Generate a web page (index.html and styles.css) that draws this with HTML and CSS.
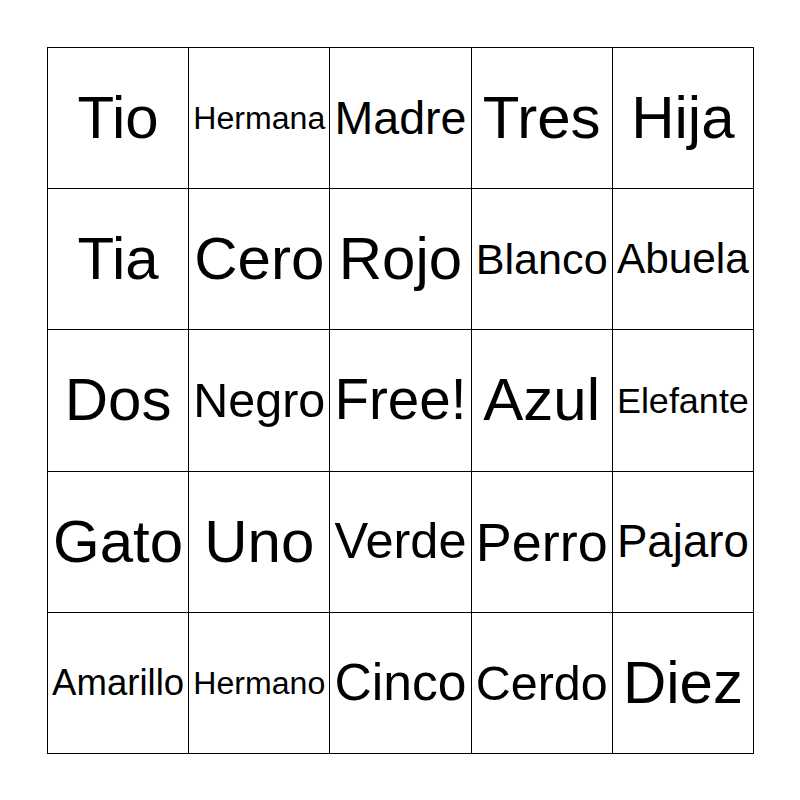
FILE: index.html
```html
<!DOCTYPE html>
<html>
<head>
<meta charset="utf-8">
<link rel="stylesheet" href="styles.css">
</head>
<body>
<div class="board">
  <div class="cell"><span class="word">Tio</span></div>
  <div class="cell"><span class="word">Hermana</span></div>
  <div class="cell"><span class="word">Madre</span></div>
  <div class="cell"><span class="word">Tres</span></div>
  <div class="cell"><span class="word">Hija</span></div>
  <div class="cell"><span class="word">Tia</span></div>
  <div class="cell"><span class="word">Cero</span></div>
  <div class="cell"><span class="word">Rojo</span></div>
  <div class="cell"><span class="word">Blanco</span></div>
  <div class="cell"><span class="word">Abuela</span></div>
  <div class="cell"><span class="word">Dos</span></div>
  <div class="cell"><span class="word">Negro</span></div>
  <div class="cell"><span class="word">Free!</span></div>
  <div class="cell"><span class="word">Azul</span></div>
  <div class="cell"><span class="word">Elefante</span></div>
  <div class="cell"><span class="word">Gato</span></div>
  <div class="cell"><span class="word">Uno</span></div>
  <div class="cell"><span class="word">Verde</span></div>
  <div class="cell"><span class="word">Perro</span></div>
  <div class="cell"><span class="word">Pajaro</span></div>
  <div class="cell"><span class="word">Amarillo</span></div>
  <div class="cell"><span class="word">Hermano</span></div>
  <div class="cell"><span class="word">Cinco</span></div>
  <div class="cell"><span class="word">Cerdo</span></div>
  <div class="cell"><span class="word">Diez</span></div>
</div>
<script src="script.js"></script>
</body>
</html>
```
FILE: styles.css
```css
html, body {
  margin: 0;
  padding: 0;
  background: #fff;
}
body {
  width: 800px;
  height: 800px;
  font-family: "Liberation Sans", Arial, sans-serif;
  color: #000;
}
.board {
  position: relative;
  margin: 47px 0 0 47px;
  width: 706px;
  height: 706px;
  border-left: 1px solid #000;
  border-top: 1px solid #000;
  display: grid;
  grid-template-columns: repeat(5, 1fr);
  grid-template-rows: repeat(5, 1fr);
}
.cell {
  border-right: 1px solid #000;
  border-bottom: 1px solid #000;
  display: flex;
  align-items: center;
  justify-content: center;
  overflow: hidden;
}
.word {
  font-size: 60px;
  line-height: 1;
  white-space: nowrap;
}
```
FILE: script.js
```js
(function () {
  var target = 132;
  var maxSize = 60;
  var words = document.querySelectorAll('.word');
  words.forEach(function (w) {
    w.style.fontSize = '100px';
    var width = w.getBoundingClientRect().width;
    var size = Math.min(maxSize, 100 * target / width);
    w.style.fontSize = size.toFixed(2) + 'px';
  });
})();
```
